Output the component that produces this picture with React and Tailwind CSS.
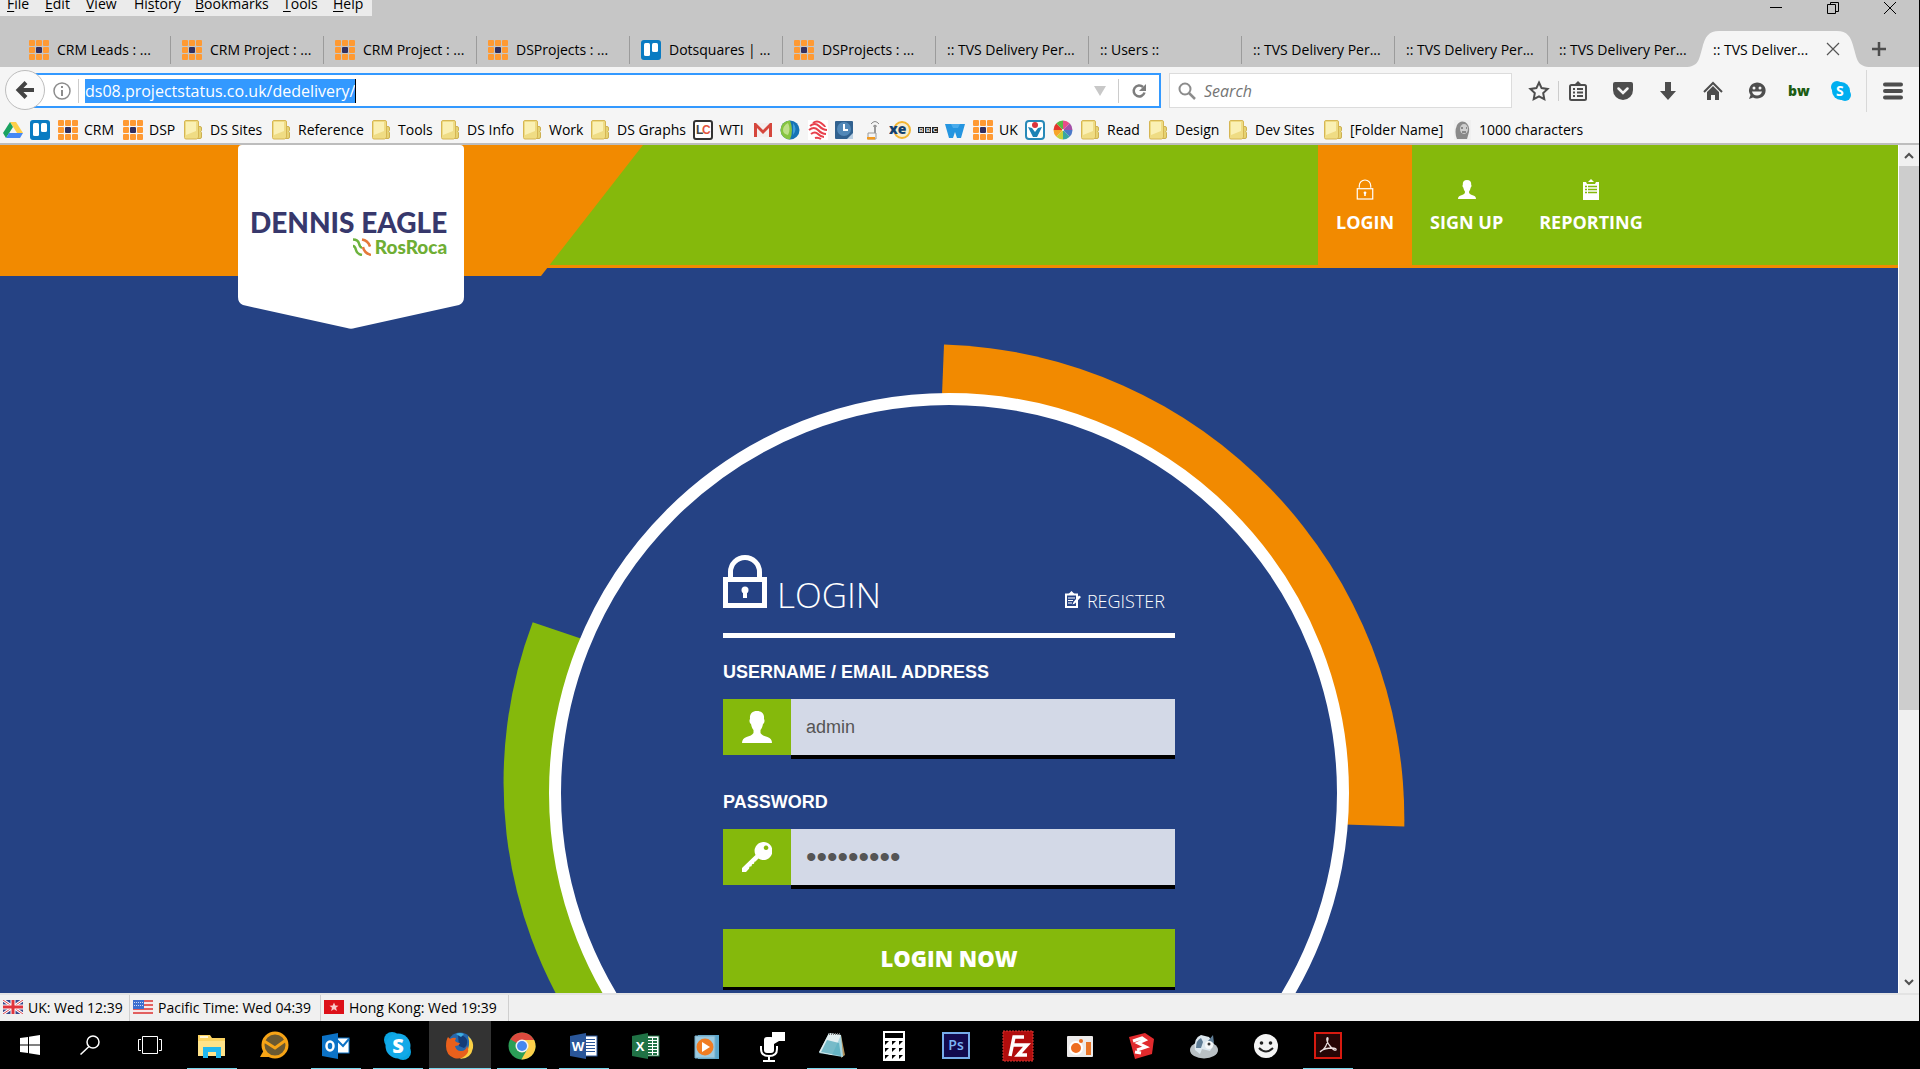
import { clsx } from "clsx";

/* ---------- small site icons ---------- */

const DotGrid = () => (
  <svg viewBox="0 0 20 20" className="w-5 h-5 shrink-0">
    {[0, 7, 14].map((y) =>
      [0, 7, 14].map((x) => (
        <rect
          key={`${x}-${y}`}
          x={x}
          y={y}
          width="6"
          height="6"
          rx="1"
          fill={x === 7 && y === 7 ? "#33305f" : "#ff9a33"}
        />
      )),
    )}
  </svg>
);

const Trello = () => (
  <svg viewBox="0 0 20 20" className="w-5 h-5 shrink-0">
    <rect width="20" height="20" rx="3" fill="#0a7bc2" />
    <rect x="3" y="3" width="6" height="13" rx="1.5" fill="#fff" />
    <rect x="11" y="3" width="6" height="9" rx="1.5" fill="#fff" />
  </svg>
);

const Drive = () => (
  <svg viewBox="0 0 20 20" className="w-5 h-5 shrink-0">
    <path d="M7 2h6l7 11h-6z" fill="#ffcf48" />
    <path d="M7 2 0 13l3 5 7-11z" fill="#1aa260" />
    <path d="M6 13h14l-3 5H3z" fill="#4688f4" />
  </svg>
);

const Folder = () => (
  <svg viewBox="0 0 20 20" className="w-5 h-5 shrink-0">
    <path d="M13 6.500h3q1.500 0 1.500 1.500v2.500l-.8 1 .8 1V17q0 1.500-1.500 1.500h-3z" fill="#e6d373" stroke="#cdb052" />
    <path d="M.5 2Q.5.5 2 .5h11q1.500 0 1.500 1.500v15.500L12.500 19H2Q.5 19 .5 17.500z" fill="#efdc84" stroke="#d6b654" />
    <path d="M2 2h10v9L2 15z" fill="#faf0b4" />
  </svg>
);

const LetterBox = () => (
  <svg viewBox="0 0 20 20" className="w-5 h-5 shrink-0">
    <rect x="1" y="1" width="18" height="18" rx="2" fill="#fff" stroke="#333" strokeWidth="2" />
    <text x="3" y="14" fontSize="12" fontWeight="700" fontFamily="Liberation Sans" fill="#444">L</text>
    <text x="9" y="14" fontSize="12" fontWeight="700" fontFamily="Liberation Sans" fill="#e2553d">C</text>
  </svg>
);

const Gmail = () => (
  <svg viewBox="0 0 20 20" className="w-5 h-5 shrink-0">
    <rect x="1" y="3" width="18" height="14" fill="#f3eeee" />
    <path d="M1 17V3h2l7 7 7-7h2v14h-3V8l-6 6-6-6v9z" fill="#d5463c" />
  </svg>
);

const Globe = () => (
  <svg viewBox="0 0 20 20" className="w-5 h-5 shrink-0">
    <circle cx="10" cy="10" r="9.500" fill="#1673b5" />
    <path d="M10 .5a9.500 9.500 0 0 0 0 19q4-9 0-19" fill="#86c440" />
    <path d="M8 3q3 6 0 12-5-1-5-5t5-7" fill="#d6eca8" opacity=".7" />
    <path d="M13 3q5 6 0 12" fill="#3f9fdc" />
  </svg>
);

const RedWave = () => (
  <svg viewBox="0 0 20 20" className="w-5 h-5 shrink-0">
    <rect width="20" height="20" fill="#fff" />
    <g fill="none" stroke="#e8414d" strokeWidth="2">
      <path d="M5 3q4-3 8 0t4 4" />
      <path d="M2 6q5-4 9 0t8 4" />
      <path d="M1 10q5-4 9 0t8 4" />
      <path d="M3 14q4-3 7 0t6 3" />
      <path d="M7 18q3-1 6 1" />
    </g>
  </svg>
);

const ClockBox = () => (
  <svg viewBox="0 0 20 20" className="w-5 h-5 shrink-0">
    <rect x="1" y="1" width="18" height="18" rx="1" fill="#31618f" />
    <circle cx="10" cy="9" r="7" fill="#5288b8" />
    <path d="M10 4v6h4" fill="none" stroke="#fff" strokeWidth="2" />
    <path d="M13 19h6v-6z" fill="#b9cfe2" />
  </svg>
);

const Router = () => (
  <svg viewBox="0 0 20 20" className="w-5 h-5 shrink-0">
    <path d="M7 4q4-5 8 0M9 6.500q2-3 4 0" fill="none" stroke="#888" />
    <path d="M11 6v11" stroke="#999" strokeWidth="2" />
    <path d="M4 13h8v6H4z" fill="#f4f4f4" stroke="#999" />
    <path d="M3 17h8v2.500H3z" fill="#f39a1e" />
  </svg>
);

const Xe = () => (
  <svg viewBox="0 0 22 20" className="w-[22px] h-5 shrink-0">
    <circle cx="13" cy="10" r="8" fill="#f5edd2" stroke="#f2b632" strokeWidth="2" />
    <text x="0" y="14" fontSize="14" fontWeight="900" fontFamily="Open Sans" fill="#11406f">xe</text>
  </svg>
);

const Bbc = () => (
  <svg viewBox="0 0 20 20" className="w-5 h-5 shrink-0">
    {[0, 7, 14].map((x, i) => (
      <g key={x}>
        <rect x={x} y="7" width="6" height="6" fill="#222" />
        <text x={x + 1} y="12" fontSize="6" fontWeight="700" fontFamily="Liberation Sans" fill="#fff">
          {"BBC"[i]}
        </text>
      </g>
    ))}
  </svg>
);

const BlueW = () => (
  <svg viewBox="0 0 20 20" className="w-5 h-5 shrink-0">
    <path d="M0 4h20l-4 14h-4l-2-6-2 6H4z" fill="#2595e0" />
    <path d="M6 4h9l-2 4H8z" fill="#4aacec" />
  </svg>
);

const TickBox = () => (
  <svg viewBox="0 0 20 20" className="w-5 h-5 shrink-0">
    <rect x="1" y="1" width="18" height="18" rx="3" fill="#fff" stroke="#2789b8" strokeWidth="2" />
    <path d="M3 7l4 1 3 4 3-4 4-1-5 10H8z" fill="#1c83b5" />
    <circle cx="10" cy="5" r="3" fill="#d8343c" />
  </svg>
);

const Pinwheel = () => (
  <svg viewBox="-10 -10 20 20" className="w-5 h-5 shrink-0">
    {["#e94b8a", "#a34fa8", "#4c79c8", "#39a7a0", "#c7d13b", "#f7a528", "#e4352b", "#58b947"].map((c, i) => (
      <path key={c} d="M0 0V-9.500A9.500 9.500 0 0 1 6.700-6.700z" fill={c} transform={`rotate(${i * 45})`} />
    ))}
    <circle r="1" fill="#f5f5f5" />
  </svg>
);

const Portrait = () => (
  <svg viewBox="0 0 20 20" className="w-5 h-5 shrink-0">
    <rect x="1" width="17" height="20" fill="#f0f0f0" />
    <path d="M4 19Q1 12 4 5q3-5 8-3 5 3 4 10l-2 7z" fill="#8a8a8a" />
    <ellipse cx="11" cy="9" rx="4" ry="5" fill="#cfcfcf" />
    <path d="M8 8h2m3 0h1M9 12h4" stroke="#444" />
  </svg>
);

/* ---------- browser chrome ---------- */

const menus = ["File", "Edit", "View", "History", "Bookmarks", "Tools", "Help"];
const menuKeys = [0, 0, 0, 2, 0, 0, 0];
const menuWidths = ["w-[38px]", "w-[41px]", "w-[48px]", "w-[61px]", "w-[88px]", "w-[50px]", "w-[39px]"];

const tabs = [
  { icon: DotGrid, label: "CRM Leads : ..." },
  { icon: DotGrid, label: "CRM Project : ..." },
  { icon: DotGrid, label: "CRM Project : ..." },
  { icon: DotGrid, label: "DSProjects : ..." },
  { icon: Trello, label: "Dotsquares | ..." },
  { icon: DotGrid, label: "DSProjects : ..." },
  { label: ":: TVS Delivery Per..." },
  { label: ":: Users ::" },
  { label: ":: TVS Delivery Per..." },
  { label: ":: TVS Delivery Per..." },
  { label: ":: TVS Delivery Per..." },
];

const bookmarks = [
  { icon: Drive, width: "w-[27px]", title: "Drive" },
  { icon: Trello, width: "w-[28px]", title: "Trello" },
  { icon: DotGrid, label: "CRM", width: "w-[65px]" },
  { icon: DotGrid, label: "DSP", width: "w-[61px]" },
  { icon: Folder, label: "DS Sites", width: "w-[88px]" },
  { icon: Folder, label: "Reference", width: "w-[100px]" },
  { icon: Folder, label: "Tools", width: "w-[69px]" },
  { icon: Folder, label: "DS Info", width: "w-[82px]" },
  { icon: Folder, label: "Work", width: "w-[68px]" },
  { icon: Folder, label: "DS Graphs", width: "w-[102px]" },
  { icon: LetterBox, label: "WTI", width: "w-[60px]" },
  { icon: Gmail, width: "w-[27px]", title: "Mail" },
  { icon: Globe, width: "w-[28px]", title: "Globe" },
  { icon: RedWave, width: "w-[26px]", title: "Waves" },
  { icon: ClockBox, width: "w-[30px]", title: "Clock" },
  { icon: Router, width: "w-[25px]", title: "Router" },
  { icon: Xe, width: "w-[29px]", title: "Currency" },
  { icon: Bbc, width: "w-[27px]", title: "News" },
  { icon: BlueW, width: "w-[28px]", title: "W" },
  { icon: DotGrid, label: "UK", width: "w-[52px]" },
  { icon: TickBox, width: "w-[28px]", title: "Tick" },
  { icon: Pinwheel, width: "w-[28px]", title: "Colours" },
  { icon: Folder, label: "Read", width: "w-[68px]" },
  { icon: Folder, label: "Design", width: "w-[80px]" },
  { icon: Folder, label: "Dev Sites", width: "w-[95px]" },
  { icon: Folder, label: "[Folder Name]", width: "w-[129px]" },
  { icon: Portrait, label: "1000 characters", width: "w-[140px]" },
];

function TitleBar() {
  return (
    <div className="flex h-[31px] items-start justify-between">
      <nav aria-label="Menu" className="flex h-4 items-start bg-[#ebebeb] pl-[7px]">
        {menus.map((m, i) => (
          <button key={m} className={clsx("text-left text-[14px] leading-2 shrink-0", menuWidths[i])}>
            {m.slice(0, menuKeys[i])}
            <u className="underline-offset-2">{m[menuKeys[i]]}</u>
            {m.slice(menuKeys[i] + 1)}
          </button>
        ))}
      </nav>
      <div className="flex pr-[22px] gap-[43px]">
        <button aria-label="Minimise">
          <svg viewBox="0 0 14 14" className="w-3.5 h-3.5">
            <path d="M1 7.500h12" stroke="#000" />
          </svg>
        </button>
        <button aria-label="Restore">
          <svg viewBox="0 0 14 14" className="w-3.5 h-3.5" fill="none" stroke="#000">
            <path d="M1.500 4.500h8v9h-8zM4.500 4.500v-2h8v9h-3" />
          </svg>
        </button>
        <button aria-label="Close window">
          <svg viewBox="0 0 14 14" className="w-3.5 h-3.5">
            <path d="M1 2l12 12M13 2 1 14" stroke="#000" />
          </svg>
        </button>
      </div>
    </div>
  );
}

function TabStrip() {
  return (
    <div className="flex h-9 pl-[18px]">
      {tabs.map(({ icon: Icon, label }, i) => (
        <button
          key={i}
          className="flex w-[153px] shrink-0 items-center gap-2 whitespace-nowrap pl-[11px] pt-px text-[14px]"
        >
          {Icon && <Icon />}
          <span className="flex-1 text-left">{label}</span>
          {i < 10 && <span className="h-7 w-px bg-[#9b9b9b]" />}
        </button>
      ))}
      <div className="relative -ml-4 flex w-[186px] shrink-0 items-center">
        <svg viewBox="0 0 186 36" className="absolute inset-0 h-9 w-[186px]">
          <path d="M0 36C14 36 14 28 17 18 20 5 24 0 34 0h118c10 0 14 5 17 18 3 10 3 18 17 18z" fill="#f5f5f5" />
        </svg>
        <button className="relative flex-1 whitespace-nowrap pt-px pl-7 text-left text-[14px]">:: TVS Deliver...</button>
        <button aria-label="Close tab" className="relative mr-[31px]">
          <svg viewBox="0 0 14 14" className="w-3.5 h-3.5">
            <path d="M1 1l12 12M13 1 1 13" stroke="#555" strokeWidth="1.200" />
          </svg>
        </button>
      </div>
      <button aria-label="New tab" className="flex w-4 items-center">
        <svg viewBox="0 0 16 16" className="w-4 h-4">
          <path d="M8 1v14M1 8h14" stroke="#4d4d4d" strokeWidth="2.500" />
        </svg>
      </button>
    </div>
  );
}

const toolIcons = [
  {
    name: "Bookmark page",
    art: <path d="M10 1.500l2.600 5.600 6 .8-4.400 4.200 1.100 6.100L10 15.300l-5.300 2.900 1.100-6.100L1.400 7.900l6-.8z" fill="none" stroke="#4d4d4d" strokeWidth="2" />,
  },
  {
    name: "Bookmarks list",
    art: (
      <>
        <rect x="2" y="4" width="16" height="15" rx="1.500" fill="none" stroke="#4d4d4d" strokeWidth="2" />
        <path d="M6 4l4-4 4 4z" fill="#4d4d4d" />
        <path d="M5 8h2m2 0h6M5 11.500h2m2 0h6M5 15h2m2 0h6" stroke="#4d4d4d" strokeWidth="2" />
      </>
    ),
  },
  {
    name: "Pocket",
    art: (
      <>
        <path d="M2 1h16q2 0 2 2v6a10 10 0 0 1-20 0V3q0-2 2-2" fill="#4d4d4d" />
        <path d="M5.500 7.500l4.500 4.500 4.500-4.500" fill="none" stroke="#f5f5f5" strokeWidth="2.500" strokeLinecap="round" />
      </>
    ),
  },
  { name: "Downloads", art: <path d="M7 1h6v9h5l-8 9-8-9h5z" fill="#4d4d4d" /> },
  {
    name: "Home",
    art: (
      <>
        <path d="M1 11l9-9 9 9" fill="none" stroke="#4d4d4d" strokeWidth="2" />
        <path d="M10 5l6 6v8h-4v-5H8v5H4v-8z" fill="#4d4d4d" />
      </>
    ),
  },
  {
    name: "Chat",
    art: (
      <>
        <path d="M10 1.500a8.500 8 0 1 1-4 15L2 18l1.500-4A8.500 8 0 0 1 10 1.500" fill="#4d4d4d" />
        <circle cx="7" cy="7" r="1.500" fill="#f5f5f5" />
        <circle cx="13" cy="7" r="1.500" fill="#f5f5f5" />
        <path d="M5 10.500h10q-1 4-5 4t-5-4" fill="#f5f5f5" />
      </>
    ),
  },
  {
    name: "BW",
    art: <text x="-1" y="15" fontSize="14" fontWeight="900" fontFamily="Open Sans" fill="#1c5c13">bw</text>,
  },
  {
    name: "Skype",
    art: (
      <>
        <circle cx="6" cy="6" r="6" fill="#00aff0" />
        <circle cx="14" cy="14" r="6" fill="#00aff0" />
        <circle cx="10" cy="10" r="9" fill="#00aff0" />
        <text x="5" y="15" fontSize="14" fontWeight="700" fontFamily="Open Sans" fill="#fff">S</text>
      </>
    ),
  },
];
const toolGaps = [
  "pr-[9px] border-r border-[#ccc] mr-[9px]",
  "mr-[25px]",
  "mr-[25px]",
  "mr-[25px]",
  "mr-[24px]",
  "mr-[22px]",
  "mr-[22px]",
  "mr-[15px]",
];

function ToolBar() {
  return (
    <div className="relative flex h-[47px] items-center pl-[25px] pr-4">
      <div className="flex h-[35px] w-[1136px] items-center border-2 border-[#3399ff] bg-white pl-[26px] pr-3">
        <svg viewBox="0 0 18 18" className="w-[18px] h-[18px] shrink-0">
          <circle cx="9" cy="9" r="8" fill="none" stroke="#8c8c8c" strokeWidth="1.500" />
          <path d="M9 4v2M9 8v6" stroke="#8c8c8c" strokeWidth="2" />
        </svg>
        <span className="ml-[7px] mr-1.5 h-6 w-px shrink-0 bg-[#ccc]" />
        <input
          aria-label="Address"
          defaultValue="ds08.projectstatus.co.uk/dedelivery/"
          className="h-6 field-sizing-content border-r border-black bg-[#3399ff] text-[16px] text-white outline-none"
        />
        <svg viewBox="0 0 12 10" className="ml-auto w-3 h-2.5 shrink-0">
          <path d="M0 0h12L6 10z" fill="#c8c8c8" />
        </svg>
        <span className="mx-3 h-6 w-px shrink-0 bg-[#ccc]" />
        <button aria-label="Reload" className="shrink-0">
          <svg viewBox="0 0 16 16" className="w-4 h-4">
            <path d="M12 4a5.500 5.500 0 1 0 1.500 5.500" fill="none" stroke="#7d7d7d" strokeWidth="2.500" />
            <path d="M15 1v7H8z" fill="#7d7d7d" />
          </svg>
        </button>
      </div>
      <button
        aria-label="Back"
        className="absolute left-[5px] top-[3px] flex h-10 w-10 items-center justify-center rounded-full border border-[#bdbdbd] bg-[#fafafa]"
      >
        <svg viewBox="0 0 20 20" className="w-5 h-5">
          <path d="M19 10H4M11 2.500 3.500 10l7.500 7.500" fill="none" stroke="#444" strokeWidth="4" />
        </svg>
      </button>
      <label className="ml-2 flex h-[35px] flex-1 items-center gap-2 border border-[#dcdcdc] bg-white pl-2">
        <svg viewBox="0 0 18 18" className="w-[18px] h-[18px] shrink-0">
          <circle cx="7" cy="7" r="5.500" fill="none" stroke="#8c8c8c" strokeWidth="2" />
          <path d="M11 11l6 6" stroke="#8c8c8c" strokeWidth="2.500" />
        </svg>
        <input
          aria-label="Search"
          placeholder="Search"
          className="min-w-0 flex-1 text-[16px] italic outline-none placeholder:text-[#757575]"
        />
      </label>
      <div className="ml-[17px] flex items-center">
        {toolIcons.map(({ name, art }, i) => (
          <button key={name} aria-label={name} className={toolGaps[i]}>
            <svg viewBox="0 0 20 20" className="w-5 h-5 overflow-visible">
              {art}
            </svg>
          </button>
        ))}
      </div>
      <button aria-label="Open menu" className="border-l border-[#d8d8d8] py-3 pl-4">
        <svg viewBox="0 0 20 18" className="w-5 h-[18px]">
          <path d="M2 2.500h16M2 9h16M2 15.500h16" stroke="#4d4d4d" strokeWidth="4" strokeLinecap="round" />
        </svg>
      </button>
    </div>
  );
}

function BookmarkBar() {
  return (
    <div className="flex h-[31px] items-center overflow-hidden border-b-2 border-[#bdbdbd] pl-[3px] pt-0.5">
      {bookmarks.map(({ icon: Icon, label, width, title }, i) => (
        <a key={i} href="#" aria-label={label || title} className={clsx("flex shrink-0 items-center gap-1.5", width)}>
          <Icon />
          {label && <span className="whitespace-nowrap text-[14px]">{label}</span>}
        </a>
      ))}
    </div>
  );
}

/* ---------- site ---------- */

const PersonIcon = ({ className }) => (
  <svg viewBox="0 0 30 32" className={className}>
    <path
      d="M15 0c5 0 7.500 3 7 8 1 1 .5 4-1 5-.5 3-1.500 5-2.500 6v3c1 2 4 3 7 4 3 1 4.500 3 4.500 6H0c0-3 1.500-5 4.500-6 3-1 6-2 7-4v-3c-1-1-2-3-2.500-6-1.500-1-2-4-1-5-.5-5 2-8 7-8"
      fill="#fff"
    />
  </svg>
);

const LockIcon = ({ className, stroke = 5 }) => (
  <svg viewBox="0 0 44 53" className={className}>
    <path d="M7.500 22v-5a14.500 14.500 0 0 1 29 0v5" fill="none" stroke="#fff" strokeWidth={stroke} />
    <rect x="2.500" y="24.500" width="39" height="26" fill="none" stroke="#fff" strokeWidth={stroke} />
    <circle cx="22" cy="35" r="3.500" fill="#fff" />
    <path d="M20 35h4v8h-4z" fill="#fff" />
  </svg>
);

const ClipboardIcon = ({ className }) => (
  <svg viewBox="0 0 18 21" className={className}>
    <path d="M1 3h16v18H1z" fill="#fff" />
    <path d="M4 3h10l-1 2H5z" fill="#85b90c" />
    <path d="M6 3l3-3 3 3z" fill="#fff" />
    <path d="M3 7.500h2m1 0h9M3 10.500h2m1 0h9M3 13.500h2m1 0h9" stroke="#85b90c" strokeWidth="1.300" />
  </svg>
);

const KeyIcon = () => (
  <svg viewBox="0 0 30 30" className="w-[30px] h-[30px]">
    <path
      d="M21 0a9 9 0 1 1-4.500 16.500l-3 3-1 .2-.5 2-2 .5-.5 2-2 .6-.5 2L4 30H0v-4l13.500-13A9 9 0 0 1 21 0m3 3.500a2.300 2.300 0 1 0 .1 0"
      fill="#fff"
      fillRule="evenodd"
    />
  </svg>
);

const RegisterIcon = () => (
  <svg viewBox="0 0 16 17" className="w-4 h-[17px]">
    <path d="M1 3.500h11V16H1z" fill="none" stroke="#fff" strokeWidth="2" />
    <path d="M3 3.500 6.500 0 10 3.500z" fill="#fff" />
    <path d="M3 7h7M3 9.500h5M3 12h4" stroke="#fff" />
    <path d="M14 4.500 8.500 11l-1 2.500 2.500-1L16 6z" fill="#fff" />
  </svg>
);

function Logo() {
  return (
    <a href="#" aria-label="Dennis Eagle RosRoca" className="relative ml-px block h-[184px] w-[226px] pt-[61px]">
      <svg viewBox="0 0 226 184" className="absolute inset-0 h-full w-full">
        <path d="M0 4q0-4 4-4h218q4 0 4 4v148q0 6-5 8l-104 23q-4 1.500-8 0L5 160q-5-2-5-8z" fill="#fff" />
      </svg>
      <span className="relative flex flex-col items-end whitespace-nowrap pr-[17px] font-['Lato','Open_Sans',sans-serif]">
        <span className="text-[28px] font-black leading-[32px] text-[#37386c]">DENNIS EAGLE</span>
        <span className="flex items-center gap-1 text-[19px] font-black leading-[18px] text-[#6fae34]">
          <svg viewBox="0 0 18 18" className="w-[18px] h-[18px]" fill="none" strokeWidth="2.500">
            <path d="M0 1.500q5 0 6 4t3 4M0 8q2 0 3 4t6 5" stroke="#6cb23c" />
            <path d="M9 1.500q6 1 8 7M10 9q1 6 8 8" stroke="#e5793a" />
          </svg>
          RosRoca
        </span>
      </span>
    </a>
  );
}

const siteNav = [
  { label: "LOGIN", icon: <LockIcon className="w-[18px] h-[21px]" stroke={3} />, active: true },
  { label: "SIGN UP", icon: <PersonIcon className="w-[18px] h-[21px]" /> },
  { label: "REPORTING", icon: <ClipboardIcon className="w-[18px] h-[21px]" /> },
];

function SiteHeader() {
  return (
    <header className="relative h-[123px] border-b-[3px] border-[#f28a00] bg-[#85b90c]">
      <div className="absolute left-0 top-0 h-[131px] w-[643px] bg-[#f28a00] [clip-path:polygon(0_0,100%_0,541px_100%,0_100%)]" />
      <div className="relative mx-auto flex w-3/4 items-start justify-between">
        <Logo />
        <nav aria-label="Site" className="flex">
          {siteNav.map(({ label, icon, active }) => (
            <a
              key={label}
              href="#"
              className={clsx(
                "flex h-[120px] flex-col items-center gap-2.5 px-[18px] pt-[34px] text-[18px] font-bold leading-6 text-white",
                active && "bg-[#f28a00]",
              )}
            >
              {icon}
              {label}
            </a>
          ))}
        </nav>
      </div>
    </header>
  );
}

function Ring() {
  return (
    <svg viewBox="489 340 920 920" className="absolute left-1/2 top-[195px] h-[920px] w-[920px] -translate-x-1/2">
      <path d="M944 344.500A475 475 0 0 1 1404.300 826.600L1330 824 941 420z" fill="#f28a00" />
      <path d="M532.700 622.300A453 453 0 0 0 580 1034L700 1000 600 645z" fill="#85b90c" />
      <circle cx="949" cy="793" r="394" fill="#254284" stroke="#fff" strokeWidth="12" />
    </svg>
  );
}

function Field({ id, label, icon, ...input }) {
  return (
    <div>
      <label htmlFor={id} className="block text-[18px] font-bold leading-6">
        {label}
      </label>
      <div className="mt-[15px] flex">
        <span className="flex h-14 w-[68px] shrink-0 items-center justify-center bg-[#85b90c]">{icon}</span>
        <input
          id={id}
          className={clsx(
            "h-[60px] min-w-0 flex-1 border-b-4 border-black bg-[#d3d9e7] px-[15px] text-[#555] outline-none",
            input.type === "password" ? "text-[30px]" : "text-[18px]",
          )}
          {...input}
        />
      </div>
    </div>
  );
}

function LoginForm() {
  return (
    <form className="relative mx-auto mt-[287px] w-[452px] font-['Liberation_Sans',Arial,sans-serif] text-white">
      <div className="flex items-end justify-between border-b-5 border-white pb-[25px] pr-2.5 font-['Open_Sans',sans-serif] font-light">
        <h1 className="flex items-end gap-2.5 text-[35px] leading-[26px]">
          <LockIcon className="w-11 h-[53px]" />
          LOGIN
        </h1>
        <a href="#" className="flex items-end gap-1.5 text-[18px] leading-[14px]">
          <RegisterIcon />
          REGISTER
        </a>
      </div>
      <div className="mt-[22px] space-y-[31px]">
        <Field
          id="username"
          label="USERNAME / EMAIL ADDRESS"
          icon={<PersonIcon className="w-[30px] h-8" />}
          defaultValue="admin"
        />
        <Field id="password" label="PASSWORD" icon={<KeyIcon />} type="password" defaultValue="password1" />
      </div>
      <button
        type="button"
        className="mt-10 h-[61px] w-full border-b-3 border-black bg-[#85b90c] font-['Open_Sans',sans-serif] text-[22px] font-extrabold"
      >
        LOGIN NOW
      </button>
    </form>
  );
}

function ScrollBar() {
  return (
    <div className="flex w-[21px] shrink-0 flex-col items-center border-l border-white bg-[#f0f0f0]">
      <svg viewBox="0 0 20 21" className="h-[21px] w-5 shrink-0">
        <path d="M6 13l4-4 4 4" fill="none" stroke="#505050" strokeWidth="2" />
      </svg>
      <div className="h-[544px] w-full bg-[#cdcdcd]" />
      <svg viewBox="0 0 20 21" className="mt-auto h-[21px] w-5 shrink-0">
        <path d="M6 8l4 4 4-4" fill="none" stroke="#505050" strokeWidth="2" />
      </svg>
    </div>
  );
}

/* ---------- clocks and taskbar ---------- */

const clocks = [
  {
    text: "UK: Wed 12:39",
    width: "w-[130px]",
    flag: (
      <>
        <rect width="20" height="14" fill="#39488c" />
        <path d="M0 0l20 14M20 0 0 14" stroke="#fff" strokeWidth="3" />
        <path d="M0 0l20 14M20 0 0 14" stroke="#e0434c" />
        <path d="M10 0v14M0 7h20" stroke="#fff" strokeWidth="5" />
        <path d="M10 0v14M0 7h20" stroke="#e0333c" strokeWidth="3" />
      </>
    ),
  },
  {
    text: "Pacific Time: Wed 04:39",
    width: "w-[191px]",
    flag: (
      <>
        <rect width="20" height="14" fill="#f6e9e9" />
        <path d="M0 1h20M0 5h20M0 9h20M0 13h20" stroke="#e2605f" strokeWidth="2" />
        <rect width="11" height="9" fill="#3c6fd0" />
        <path d="M1 2.500h9M1 5.500h9" stroke="#cfdcf5" strokeDasharray="1 1" />
      </>
    ),
  },
  {
    text: "Hong Kong: Wed 19:39",
    width: "w-[188px]",
    flag: (
      <>
        <rect width="20" height="14" fill="#dd1119" />
        <path d="M10 2.500l1.300 3 3.200.2-2.500 2 1 3.300-3-1.800L7 11l1-3.300-2.500-2 3.200-.2z" fill="#f8caca" />
      </>
    ),
  },
];

function StatusBar() {
  return (
    <div className="flex h-7 border-t-2 border-[#e3e3e3] bg-[#f0f0f0]">
      {clocks.map(({ text, width, flag }) => (
        <div
          key={text}
          className={clsx("flex shrink-0 items-center gap-[5px] whitespace-nowrap border-r border-[#cfcfcf] pb-0.5 pl-[3px] text-[14px]", width)}
        >
          <svg viewBox="0 0 20 14" className="w-5 h-3.5 shrink-0">
            {flag}
          </svg>
          {text}
        </div>
      ))}
    </div>
  );
}

const OfficeDoc = ({ color, letter, children }) => (
  <>
    <rect x="12" y="4" width="15" height="20" fill="#fff" stroke={color} />
    {children}
    <path d="M0 4l16-3v26L0 24z" fill={color} />
    <text x="8" y="19" textAnchor="middle" fontSize="13" fontWeight="700" fontFamily="Open Sans" fill="#fff">
      {letter}
    </text>
  </>
);

const apps = [
  {
    name: "File Explorer",
    open: true,
    art: (
      <>
        <path d="M0 3h12l2 3h13v18H0z" fill="#fcd462" />
        <path d="M0 9h27v15H0z" fill="#ffe38a" />
        <path d="M2 4h8v2H2z" fill="#fff6d8" />
        <path d="M5 26V15h18v11h-5v-6h-8v6z" fill="#22b8ef" />
      </>
    ),
  },
  {
    name: "eM Client",
    art: (
      <>
        <circle cx="15" cy="13" r="12" fill="#6a5932" stroke="#f7a416" strokeWidth="3" />
        <path d="M4 9l11 7 11-8" fill="none" stroke="#f7a416" strokeWidth="3" />
        <path d="M0 25l4-7 6 7z" fill="#f7a416" />
      </>
    ),
  },
  {
    name: "Outlook",
    open: true,
    art: (
      <>
        <rect x="14" y="6" width="13" height="15" fill="#fff" stroke="#0c72c6" />
        <path d="M15 8l6 6 6-7" fill="none" stroke="#0c72c6" strokeWidth="2" />
        <path d="M0 4l16-3v26L0 24z" fill="#0c72c6" />
        <ellipse cx="8" cy="14" rx="3.500" ry="4.500" fill="none" stroke="#fff" strokeWidth="2.500" />
      </>
    ),
  },
  {
    name: "Skype",
    open: true,
    art: (
      <>
        <circle cx="8" cy="8" r="8" fill="#0aa5e2" />
        <circle cx="19" cy="20" r="8" fill="#0aa5e2" />
        <circle cx="14" cy="14" r="12.500" fill="#12a9e8" />
        <text x="14" y="21" textAnchor="middle" fontSize="20" fontWeight="800" fontFamily="Open Sans" fill="#fff">S</text>
      </>
    ),
  },
  {
    name: "Firefox",
    open: true,
    active: true,
    art: (
      <>
        <circle cx="14" cy="13" r="12.500" fill="#2567ad" />
        <path d="M12 3q7 0 9 5 1 5-3 8l-5-2z" fill="#143c78" />
        <path d="M10 2q4-2 8 0l-3 3z" fill="#3fb1e3" />
        <path d="M22 4q6 5 5 12-2 11-13 11l6-6q5-7 2-17" fill="#fbd044" />
        <path d="M2 5l2 2q3-2 6-1l-1 3q2 2 5 2-1 3-5 3 1 5 6 5 5 0 6-5 3 5-1 9-5 5-12 3Q0 23 0 14q0-6 2-9" fill="#e9601c" />
      </>
    ),
  },
  {
    name: "Chrome",
    open: true,
    art: (
      <>
        <circle cx="14" cy="14" r="13.500" fill="#2b9f57" />
        <path d="M14 14 2.300 7.200A13.500 13.500 0 0 1 25.700 7.200L26 9z" fill="#dc4a3e" />
        <path d="M14 8h12.200a13.500 13.500 0 0 1-12.800 19.500L20 16z" fill="#fdd04b" />
        <circle cx="14" cy="14" r="6.500" fill="#f4f4f4" />
        <circle cx="14" cy="14" r="5" fill="#4688f0" />
      </>
    ),
  },
  {
    name: "Word",
    open: true,
    art: (
      <OfficeDoc color="#2a5699" letter="W">
        <path d="M16 7.500h9M16 10.500h9M16 13.500h9M16 16.500h9M16 19.500h9" stroke="#2a5699" />
      </OfficeDoc>
    ),
  },
  {
    name: "Excel",
    art: (
      <OfficeDoc color="#207245" letter="X">
        <path d="M16 7h9M16 10h9M16 13h9M16 16h9M16 19h9M16 22h9" stroke="#207245" strokeWidth="2" />
        <path d="M20.500 5v18" stroke="#fff" />
      </OfficeDoc>
    ),
  },
  {
    name: "Media Player",
    art: (
      <>
        <path d="M4 3h21v24H4z" fill="#5ba6cb" />
        <path d="M1 4h20v22H1z" fill="#9ccae0" stroke="#76aecb" />
        <circle cx="11" cy="15" r="8.500" fill="#f07c22" />
        <path d="M8 10l8 5-8 5z" fill="#fff" />
      </>
    ),
  },
  {
    name: "Voice Recorder",
    art: (
      <>
        <path d="M16 0h13v9h-6l-5 3V9h-2z" fill="#fff" />
        <rect x="8" y="5" width="10" height="16" rx="3" fill="#fff" />
        <path d="M5 14v3q0 7 8 7t8-7v-3M13 24v4M7 29h12" fill="none" stroke="#fff" strokeWidth="2" />
      </>
    ),
  },
  {
    name: "Notepad",
    open: true,
    art: (
      <>
        <path d="M23 3l4 20-4 3z" fill="#b3925c" />
        <path d="M11 1l12 2 2 22-24-4z" fill="#a6d5df" />
        <path d="M11 1l12 2-9 20L1 20z" fill="#e2eef0" />
        <path d="M9 8l12 3 2 13-20-4z" fill="#4aa5b8" opacity=".7" />
        <path d="M11 2h12" stroke="#777" strokeWidth="2" strokeDasharray="1 1" />
      </>
    ),
  },
  {
    name: "Calculator",
    art: (
      <>
        <rect x="3" y="-1" width="22" height="30" fill="#fff" />
        <rect x="5" y="1" width="18" height="5" fill="#000" />
        {[9, 16, 23].map((y) =>
          [5, 12, 19].map((x) => <path key={`${x}-${y}`} d={`M${x} ${y}h4l-4 4z`} fill="#000" />),
        )}
      </>
    ),
  },
  {
    name: "Photoshop",
    art: (
      <>
        <rect x="1" y="1" width="26" height="25" fill="#120a4e" stroke="#76acea" strokeWidth="2" />
        <text x="14" y="18" textAnchor="middle" fontSize="14" fontWeight="600" fontFamily="Open Sans" fill="#7db5f5">
          Ps
        </text>
      </>
    ),
  },
  {
    name: "FileZilla",
    art: (
      <>
        <rect x="-1" y="-1" width="30" height="30" fill="#b10d0d" stroke="#d73a35" strokeDasharray="2 1" />
        <path d="M6 24 10 5h10M8 13h9M14 13h9l-9 10h9" fill="none" stroke="#fff" strokeWidth="3.500" />
      </>
    ),
  },
  {
    name: "Screen Recorder",
    art: (
      <>
        <rect x="1" y="4" width="26" height="21" rx="1" fill="#eceaea" />
        <circle cx="10" cy="16" r="6" fill="#ee6d21" stroke="#fff" strokeWidth="2" />
        <circle cx="15" cy="9" r="2" fill="#ee6d21" />
        <path d="M20 10h5v13h-5z" fill="#e87528" />
      </>
    ),
  },
  {
    name: "SketchUp",
    art: (
      <>
        <path d="M1 5l16-4 9 6-2 15-17 5z" fill="#e12a2d" />
        <path d="M5 9l9-3 3 2-7 3 8 4-9 3" fill="none" stroke="#fff" strokeWidth="3" />
        <path d="M7 20l6 1" stroke="#fff" strokeWidth="3" />
      </>
    ),
  },
  {
    name: "Disk Utility",
    art: (
      <>
        <ellipse cx="14" cy="18" rx="14" ry="8.500" fill="#b9c0c4" />
        <path d="M5 18Q3 6 11 3l8 2 5 7-4 7-8-2-2 5z" fill="#dce7ee" />
        <path d="M6 16q0-8 5-10l2 4-2 6zM18 9l5-6 1 8z" fill="#5f7d96" />
        <circle cx="19" cy="13" r="4" fill="#f6f8f9" />
        <circle cx="19" cy="12" r="1.500" fill="#333" />
      </>
    ),
  },
  {
    name: "Smiley",
    art: (
      <>
        <circle cx="14" cy="14" r="12" fill="#f4f4f4" />
        <circle cx="9.500" cy="11" r="1.800" fill="#222" />
        <circle cx="18.500" cy="11" r="1.800" fill="#222" />
        <path d="M7 16q7 7 14 0" fill="none" stroke="#222" strokeWidth="2" />
      </>
    ),
  },
  {
    name: "Acrobat",
    open: true,
    art: (
      <>
        <rect x="1" y="1" width="26" height="25" fill="#250606" stroke="#d71a10" strokeWidth="2" />
        <path d="M6 20q7-4 8-13 0-2-1-1-1 3 3 8t6 4q1-2-4-2-7 0-11 3z" fill="none" stroke="#e8dede" strokeWidth="1.300" />
      </>
    ),
  },
];

function TaskBar() {
  return (
    <nav aria-label="Taskbar" className="flex h-12 bg-black">
      <button aria-label="Start" className="flex w-[60px] items-center justify-center">
        <svg viewBox="0 0 20 20" className="w-5 h-5">
          <path d="M0 3l8-1v7.500H0zM9 1.800 20 0v9.500H9zM0 10.500h8V18l-8-1zM9 10.500h11V20L9 18.200z" fill="#fff" />
        </svg>
      </button>
      <button aria-label="Search Windows" className="flex w-[60px] items-center justify-center">
        <svg viewBox="0 0 20 20" className="w-5 h-5" fill="none" stroke="#fff" strokeWidth="1.500">
          <circle cx="13" cy="7" r="6" />
          <path d="M9 11.500.5 19.500" />
        </svg>
      </button>
      <button aria-label="Task View" className="flex w-[60px] items-center justify-center">
        <svg viewBox="0 0 24 18" className="w-6 h-[18px]" fill="none" stroke="#fff">
          <path d="M4.500.5h15v17h-15zM3 3.500H.5v11H3M21 3.500h2.500v11H21" />
        </svg>
      </button>
      <div className="flex pl-px">
        {apps.map(({ name, art, open, active }) => (
          <button
            key={name}
            aria-label={name}
            className={clsx("relative flex w-[62px] items-center justify-center pt-0.5", active && "bg-[#333]")}
          >
            <svg viewBox="0 0 28 28" className="w-7 h-7 overflow-visible">
              {art}
            </svg>
            {open && (
              <span className={clsx("absolute bottom-0 h-px bg-[#76d5ea]", active ? "inset-x-0" : "left-1.5 right-1.5")} />
            )}
          </button>
        ))}
      </div>
    </nav>
  );
}

export default function App() {
  return (
    <div className="flex h-screen flex-col overflow-hidden bg-[#f5f5f5] font-['Open_Sans','Noto_Sans',sans-serif] text-black">
      <div className="flex min-h-0 flex-1 flex-col border-r border-black">
        <div className="bg-[#c6c6c6]">
          <TitleBar />
          <TabStrip />
        </div>
        <ToolBar />
        <BookmarkBar />
        <div className="flex min-h-0 flex-1">
          <main className="relative min-w-0 flex-1 overflow-hidden bg-[#254284]">
            <Ring />
            <SiteHeader />
            <LoginForm />
          </main>
          <ScrollBar />
        </div>
        <StatusBar />
      </div>
      <TaskBar />
    </div>
  );
}
